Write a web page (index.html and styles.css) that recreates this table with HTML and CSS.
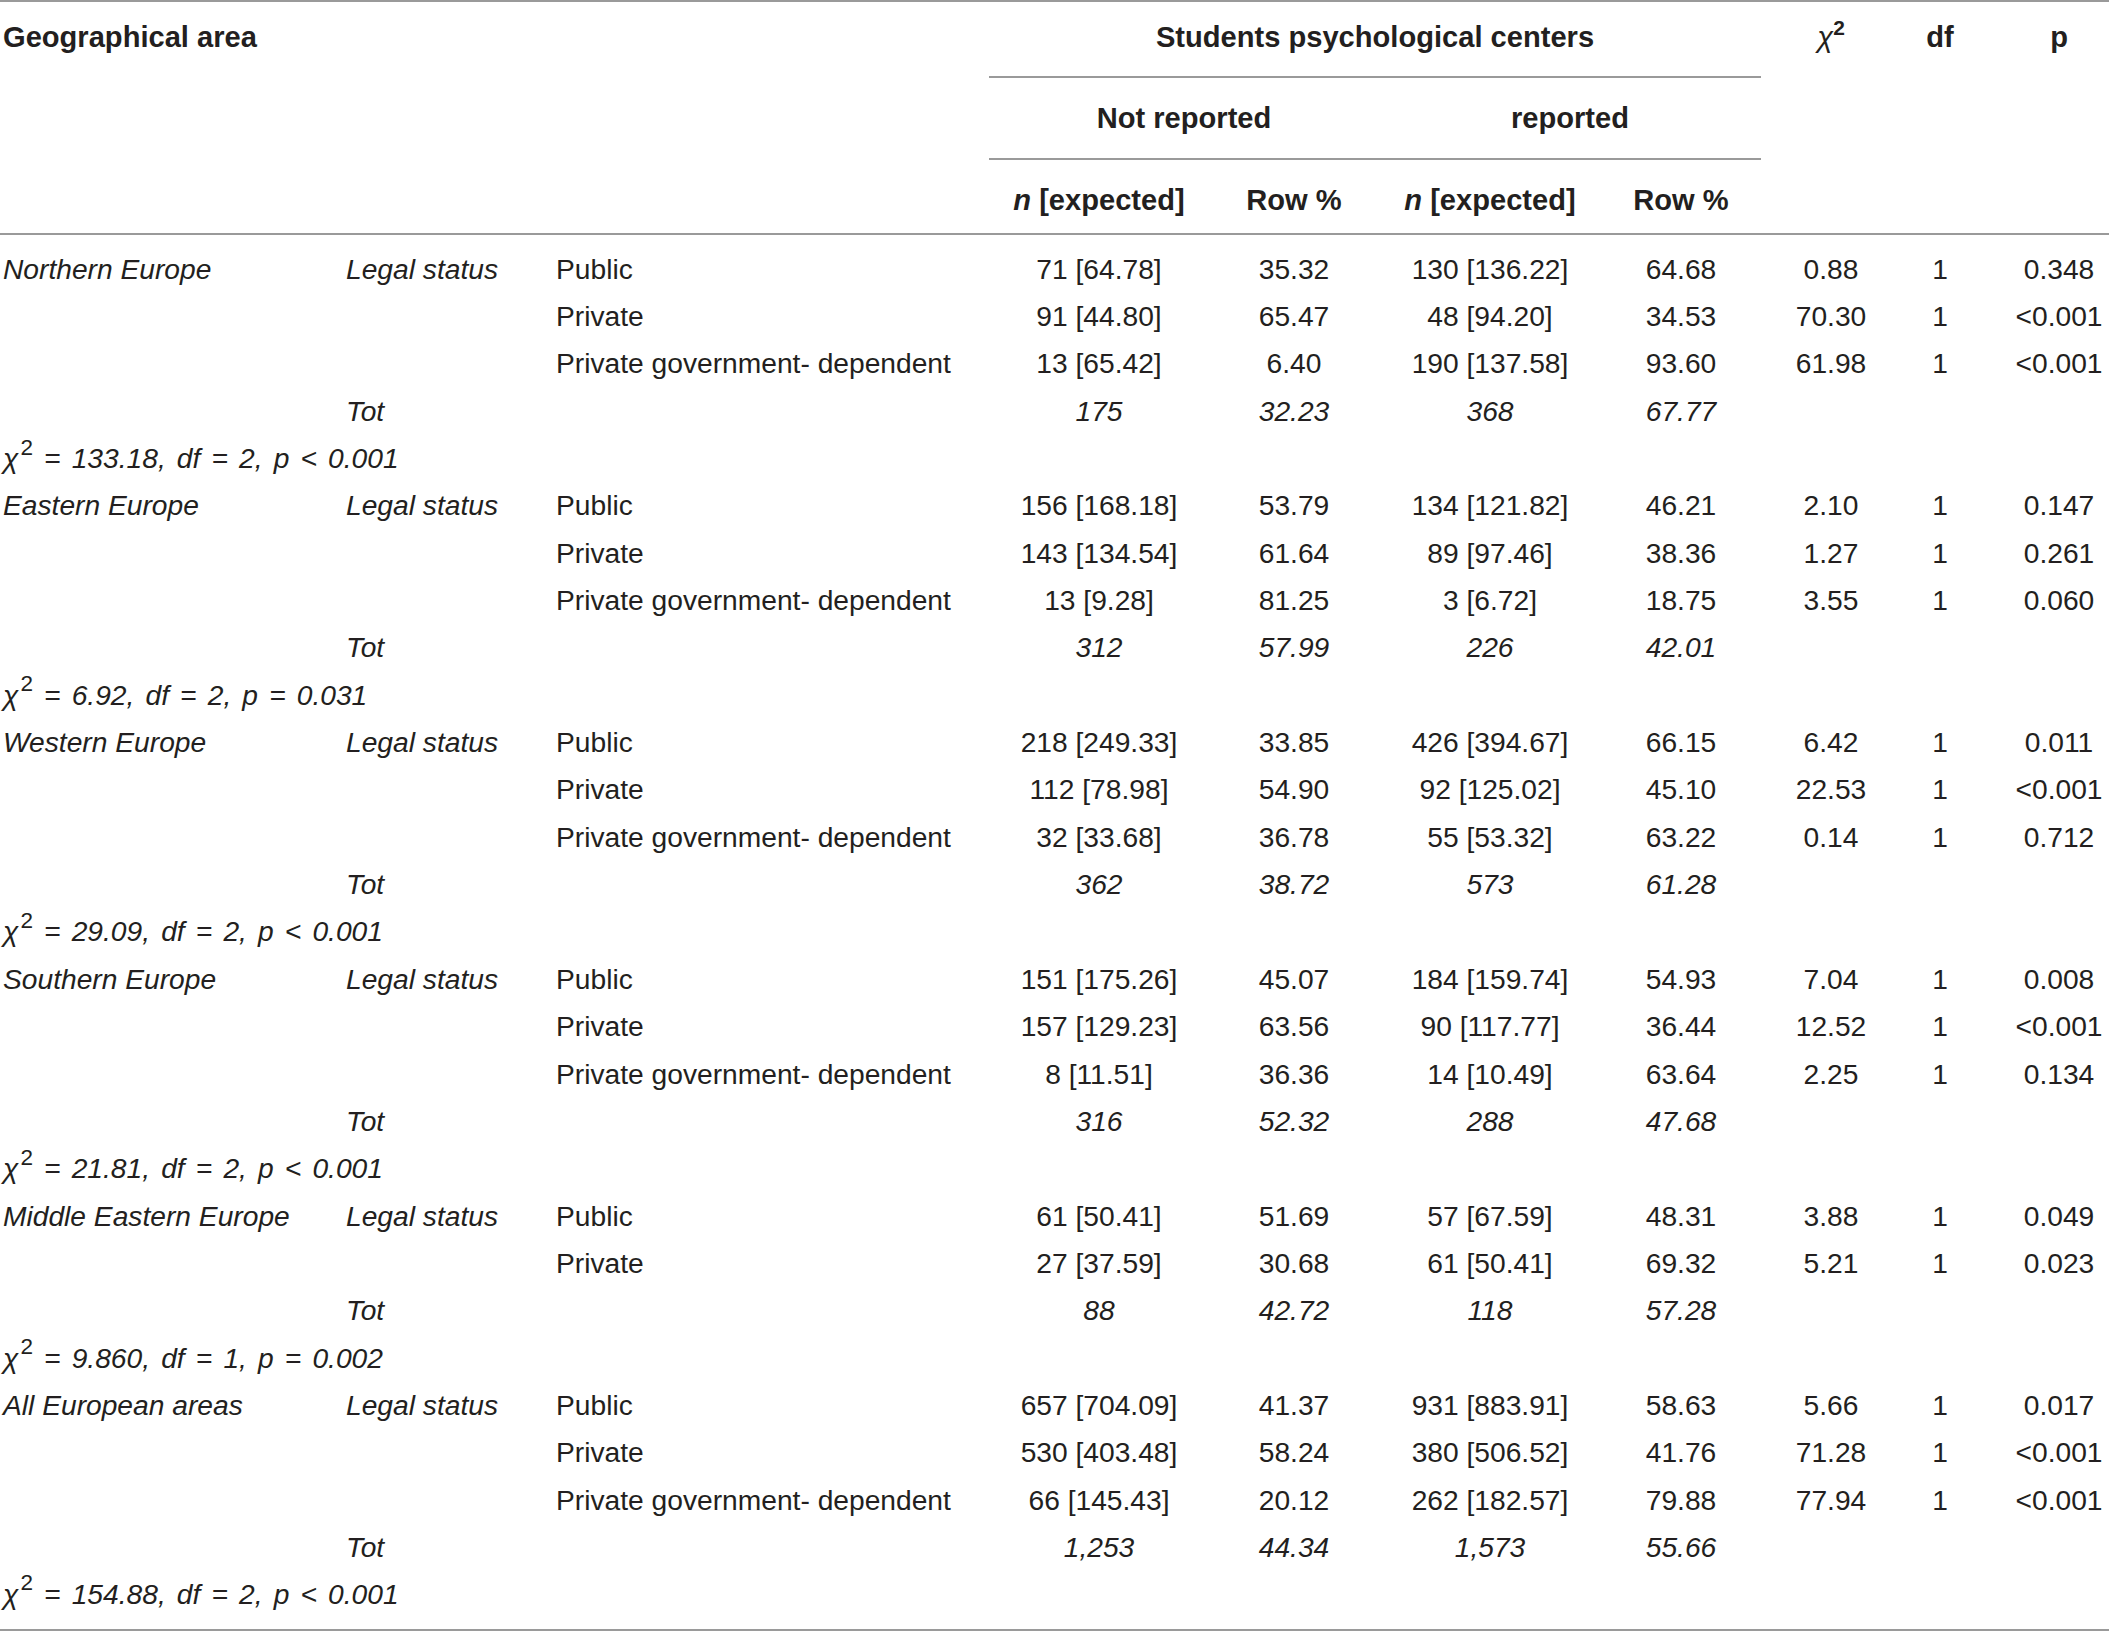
FILE: index.html
```html
<!DOCTYPE html>
<html>
<head>
<meta charset="utf-8">
<link rel="stylesheet" href="styles.css">
</head>
<body>
<table class="t">
<colgroup>
<col class="c1"><col class="c2"><col class="c3"><col class="c4"><col class="c5"><col class="c6"><col class="c7"><col class="c8"><col class="c9"><col class="c10">
</colgroup>
<thead>
<tr class="h1">
<th colspan="3" rowspan="3" class="left hb">Geographical area</th>
<th colspan="4" class="span">Students psychological centers</th>
<th rowspan="3" class="hb"><span class="chi">χ</span><sup>2</sup></th>
<th rowspan="3" class="hb">df</th>
<th rowspan="3" class="hb pcol">p</th>
</tr>
<tr class="h2">
<th colspan="2" class="span">Not reported</th>
<th colspan="2" class="span">reported</th>
</tr>
<tr class="h3">
<th class="hb"><i>n</i> [expected]</th>
<th class="hb">Row %</th>
<th class="hb"><i>n</i> [expected]</th>
<th class="hb">Row %</th>
</tr>
</thead>
<tbody>
<tr class="first"><td class="area">Northern Europe</td><td class="ls">Legal status</td><td class="cat">Public</td><td>71 [64.78]</td><td>35.32</td><td>130 [136.22]</td><td>64.68</td><td>0.88</td><td>1</td><td class="pcol">0.348</td></tr>
<tr><td></td><td></td><td class="cat">Private</td><td>91 [44.80]</td><td>65.47</td><td>48 [94.20]</td><td>34.53</td><td>70.30</td><td>1</td><td class="pcol">&lt;0.001</td></tr>
<tr><td></td><td></td><td class="cat">Private government- dependent</td><td>13 [65.42]</td><td>6.40</td><td>190 [137.58]</td><td>93.60</td><td>61.98</td><td>1</td><td class="pcol">&lt;0.001</td></tr>
<tr class="tot"><td></td><td class="ls">Tot</td><td></td><td>175</td><td>32.23</td><td>368</td><td>67.77</td><td></td><td></td><td></td></tr>
<tr><td colspan="10" class="sum"><span class="chi">χ</span><sup>2</sup> = 133.18, df = 2, p &lt; 0.001</td></tr>

<tr><td class="area">Eastern Europe</td><td class="ls">Legal status</td><td class="cat">Public</td><td>156 [168.18]</td><td>53.79</td><td>134 [121.82]</td><td>46.21</td><td>2.10</td><td>1</td><td class="pcol">0.147</td></tr>
<tr><td></td><td></td><td class="cat">Private</td><td>143 [134.54]</td><td>61.64</td><td>89 [97.46]</td><td>38.36</td><td>1.27</td><td>1</td><td class="pcol">0.261</td></tr>
<tr><td></td><td></td><td class="cat">Private government- dependent</td><td>13 [9.28]</td><td>81.25</td><td>3 [6.72]</td><td>18.75</td><td>3.55</td><td>1</td><td class="pcol">0.060</td></tr>
<tr class="tot"><td></td><td class="ls">Tot</td><td></td><td>312</td><td>57.99</td><td>226</td><td>42.01</td><td></td><td></td><td></td></tr>
<tr><td colspan="10" class="sum"><span class="chi">χ</span><sup>2</sup> = 6.92, df = 2, p = 0.031</td></tr>

<tr><td class="area">Western Europe</td><td class="ls">Legal status</td><td class="cat">Public</td><td>218 [249.33]</td><td>33.85</td><td>426 [394.67]</td><td>66.15</td><td>6.42</td><td>1</td><td class="pcol">0.011</td></tr>
<tr><td></td><td></td><td class="cat">Private</td><td>112 [78.98]</td><td>54.90</td><td>92 [125.02]</td><td>45.10</td><td>22.53</td><td>1</td><td class="pcol">&lt;0.001</td></tr>
<tr><td></td><td></td><td class="cat">Private government- dependent</td><td>32 [33.68]</td><td>36.78</td><td>55 [53.32]</td><td>63.22</td><td>0.14</td><td>1</td><td class="pcol">0.712</td></tr>
<tr class="tot"><td></td><td class="ls">Tot</td><td></td><td>362</td><td>38.72</td><td>573</td><td>61.28</td><td></td><td></td><td></td></tr>
<tr><td colspan="10" class="sum"><span class="chi">χ</span><sup>2</sup> = 29.09, df = 2, p &lt; 0.001</td></tr>

<tr><td class="area">Southern Europe</td><td class="ls">Legal status</td><td class="cat">Public</td><td>151 [175.26]</td><td>45.07</td><td>184 [159.74]</td><td>54.93</td><td>7.04</td><td>1</td><td class="pcol">0.008</td></tr>
<tr><td></td><td></td><td class="cat">Private</td><td>157 [129.23]</td><td>63.56</td><td>90 [117.77]</td><td>36.44</td><td>12.52</td><td>1</td><td class="pcol">&lt;0.001</td></tr>
<tr><td></td><td></td><td class="cat">Private government- dependent</td><td>8 [11.51]</td><td>36.36</td><td>14 [10.49]</td><td>63.64</td><td>2.25</td><td>1</td><td class="pcol">0.134</td></tr>
<tr class="tot"><td></td><td class="ls">Tot</td><td></td><td>316</td><td>52.32</td><td>288</td><td>47.68</td><td></td><td></td><td></td></tr>
<tr><td colspan="10" class="sum"><span class="chi">χ</span><sup>2</sup> = 21.81, df = 2, p &lt; 0.001</td></tr>

<tr><td class="area">Middle Eastern Europe</td><td class="ls">Legal status</td><td class="cat">Public</td><td>61 [50.41]</td><td>51.69</td><td>57 [67.59]</td><td>48.31</td><td>3.88</td><td>1</td><td class="pcol">0.049</td></tr>
<tr><td></td><td></td><td class="cat">Private</td><td>27 [37.59]</td><td>30.68</td><td>61 [50.41]</td><td>69.32</td><td>5.21</td><td>1</td><td class="pcol">0.023</td></tr>
<tr class="tot"><td></td><td class="ls">Tot</td><td></td><td>88</td><td>42.72</td><td>118</td><td>57.28</td><td></td><td></td><td></td></tr>
<tr><td colspan="10" class="sum"><span class="chi">χ</span><sup>2</sup> = 9.860, df = 1, p = 0.002</td></tr>

<tr><td class="area">All European areas</td><td class="ls">Legal status</td><td class="cat">Public</td><td>657 [704.09]</td><td>41.37</td><td>931 [883.91]</td><td>58.63</td><td>5.66</td><td>1</td><td class="pcol">0.017</td></tr>
<tr><td></td><td></td><td class="cat">Private</td><td>530 [403.48]</td><td>58.24</td><td>380 [506.52]</td><td>41.76</td><td>71.28</td><td>1</td><td class="pcol">&lt;0.001</td></tr>
<tr><td></td><td></td><td class="cat">Private government- dependent</td><td>66 [145.43]</td><td>20.12</td><td>262 [182.57]</td><td>79.88</td><td>77.94</td><td>1</td><td class="pcol">&lt;0.001</td></tr>
<tr class="tot"><td></td><td class="ls">Tot</td><td></td><td>1,253</td><td>44.34</td><td>1,573</td><td>55.66</td><td></td><td></td><td></td></tr>
<tr class="last"><td colspan="10" class="sum"><span class="chi">χ</span><sup>2</sup> = 154.88, df = 2, p &lt; 0.001</td></tr>
</tbody>
</table>
</body>
</html>
```
FILE: styles.css
```css
html, body {
  margin: 0;
  padding: 0;
  background: #ffffff;
}
body {
  font-family: "Liberation Sans", Arial, sans-serif;
  font-size: 28.2px;
  color: #231f20;
}
.t {
  width: 2109px;
  table-layout: fixed;
  border-collapse: collapse;
  border-top: 2px solid #9a9a9a;
  border-bottom: 2px solid #9a9a9a;
}
.c1 { width: 346px; }
.c2 { width: 210px; }
.c3 { width: 433px; }
.c4 { width: 220px; }
.c5 { width: 170px; }
.c6 { width: 222px; }
.c7 { width: 160px; }
.c8 { width: 140px; }
.c9 { width: 78px; }
.c10 { width: 130px; }

th {
  font-weight: bold;
  font-size: 29.1px;
  text-align: center;
  vertical-align: top;
  padding: 0;
  line-height: 32px;
  white-space: nowrap;
}
th.left {
  text-align: left;
  padding-left: 3px;
}
.h1 th { padding-top: 19px; }
.h1 { height: 76px; }
.h2 th { padding-top: 24px; }
.h2 { height: 82px; }
.h3 th { padding-top: 24px; }
.h3 { height: 75px; }
th.span {
  border-bottom: 2px solid #9a9a9a;
}
th.hb {
  border-bottom: 2px solid #9a9a9a;
}
th.pcol, td.pcol {
  padding-left: 30px;
}
sup {
  font-size: 0.72em;
  line-height: 0;
  vertical-align: 0.55em;
  font-style: normal;
}
th sup { font-weight: bold; }
.chi {
  font-style: italic;
  font-weight: normal;
}

td {
  padding: 0;
  height: 47.35px;
  line-height: 32px;
  text-align: center;
  vertical-align: middle;
  white-space: nowrap;
}
td.area {
  text-align: left;
  font-style: italic;
  padding-left: 3px;
}
td.ls {
  text-align: left;
  font-style: italic;
}
td.cat {
  text-align: left;
}
tr.tot td {
  font-style: italic;
}
td.sum {
  text-align: left;
  font-style: italic;
  padding-left: 3px;
  word-spacing: 3.3px;
}
td.sum sup {
  font-size: 0.8em;
  vertical-align: 0.6em;
  margin-left: 2px;
}
tr.first td {
  padding-top: 11px;
  height: 58.35px;
  box-sizing: border-box;
}
tr.last td {
  padding-bottom: 12px;
  height: 59.35px;
  box-sizing: border-box;
}
```
